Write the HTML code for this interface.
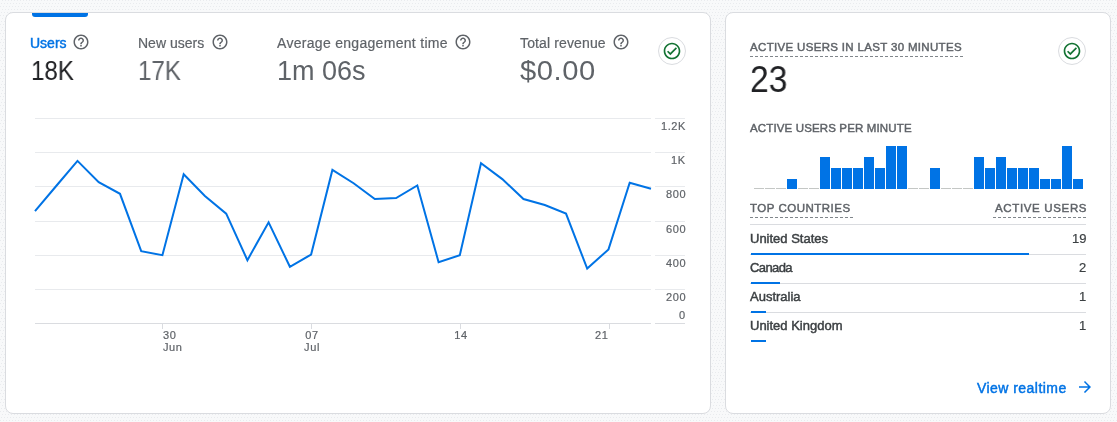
<!DOCTYPE html>
<html><head><meta charset="utf-8"><style>
html,body{margin:0;padding:0;}
body{width:1117px;height:422px;overflow:hidden;position:relative;background:#f8f9fa;font-family:"Liberation Sans",sans-serif;}
.card{position:absolute;background:#fff;border:1px solid #dadce0;border-radius:8px;box-sizing:border-box;}
.t{position:absolute;white-space:nowrap;line-height:1;will-change:transform;}
.s{-webkit-text-stroke:0.2px currentColor;}
.m{-webkit-text-stroke:0.45px currentColor;}
</style></head><body>
<svg style="position:absolute;left:0;top:0" width="1117" height="422"><defs><pattern id="dots" x="0" y="0" width="9" height="9" patternUnits="userSpaceOnUse"><rect x="2" y="0" width="1" height="1" fill="#e9ebee"/><rect x="5" y="0" width="1" height="1" fill="#e9ebee"/><rect x="8" y="0" width="1" height="1" fill="#e9ebee"/><rect x="1" y="3" width="1" height="1" fill="#e9ebee"/><rect x="4" y="3" width="1" height="1" fill="#e9ebee"/><rect x="7" y="3" width="1" height="1" fill="#e9ebee"/><rect x="0" y="6" width="1" height="1" fill="#e9ebee"/><rect x="3" y="6" width="1" height="1" fill="#e9ebee"/><rect x="6" y="6" width="1" height="1" fill="#e9ebee"/></pattern></defs><rect x="0" y="0" width="1117" height="422" fill="url(#dots)"/></svg>
<div class="card" style="left:5px;top:12px;width:706px;height:402px"></div>
<div class="card" style="left:725px;top:12px;width:386px;height:402px"></div>
<div style="position:absolute;left:32px;top:13px;width:56px;height:4px;background:#0073e5;border-radius:0 0 3px 3px"></div>
<svg style="position:absolute;left:0;top:0" width="1117" height="422">
<rect x="35" y="118" width="616" height="1" fill="#e8eaed"/><rect x="655" y="118" width="30" height="1" fill="#e8eaed"/><rect x="35" y="152" width="616" height="1" fill="#e8eaed"/><rect x="655" y="152" width="30" height="1" fill="#e8eaed"/><rect x="35" y="186" width="616" height="1" fill="#e8eaed"/><rect x="655" y="186" width="30" height="1" fill="#e8eaed"/><rect x="35" y="221" width="616" height="1" fill="#e8eaed"/><rect x="655" y="221" width="30" height="1" fill="#e8eaed"/><rect x="35" y="255" width="616" height="1" fill="#e8eaed"/><rect x="655" y="255" width="30" height="1" fill="#e8eaed"/><rect x="35" y="289" width="616" height="1" fill="#e8eaed"/><rect x="655" y="289" width="30" height="1" fill="#e8eaed"/><rect x="35" y="323" width="616" height="1" fill="#dadce0"/><rect x="655" y="323" width="30" height="1" fill="#dadce0"/><rect x="162" y="323" width="1" height="6" fill="#dadce0"/><rect x="311" y="323" width="1" height="6" fill="#dadce0"/><rect x="460" y="323" width="1" height="6" fill="#dadce0"/><rect x="609" y="323" width="1" height="6" fill="#dadce0"/>
<polyline points="35.0,211.2 56.2,186.0 77.5,160.9 98.7,182.2 120.0,193.8 141.2,251.2 162.4,255.2 183.7,174.2 204.9,196.0 226.2,213.7 247.4,260.2 268.6,222.3 289.9,266.8 311.1,254.5 332.4,169.9 353.6,183.2 374.8,199.1 396.1,198.1 417.3,185.5 438.6,262.2 459.8,255.2 481.0,163.2 502.3,179.1 523.5,199.0 544.8,205.0 566.0,213.6 587.2,268.6 608.5,249.4 629.7,182.8 651.0,188.7" fill="none" stroke="#0073e5" stroke-width="2" stroke-linejoin="miter"/>
<rect x="754" y="188" width="10" height="1" fill="#c4c7c5"/><rect x="765" y="188" width="10" height="1" fill="#c4c7c5"/><rect x="776" y="188" width="10" height="1" fill="#c4c7c5"/><rect x="787" y="179" width="10" height="10" fill="#0073e5"/><rect x="798" y="188" width="10" height="1" fill="#c4c7c5"/><rect x="809" y="188" width="10" height="1" fill="#c4c7c5"/><rect x="820" y="157" width="10" height="32" fill="#0073e5"/><rect x="831" y="168" width="10" height="21" fill="#0073e5"/><rect x="842" y="168" width="10" height="21" fill="#0073e5"/><rect x="853" y="168" width="10" height="21" fill="#0073e5"/><rect x="864" y="157" width="10" height="32" fill="#0073e5"/><rect x="875" y="168" width="10" height="21" fill="#0073e5"/><rect x="886" y="146" width="10" height="43" fill="#0073e5"/><rect x="897" y="146" width="10" height="43" fill="#0073e5"/><rect x="908" y="188" width="10" height="1" fill="#c4c7c5"/><rect x="919" y="188" width="10" height="1" fill="#c4c7c5"/><rect x="930" y="168" width="10" height="21" fill="#0073e5"/><rect x="941" y="188" width="10" height="1" fill="#c4c7c5"/><rect x="952" y="188" width="10" height="1" fill="#c4c7c5"/><rect x="963" y="188" width="10" height="1" fill="#c4c7c5"/><rect x="974" y="157" width="10" height="32" fill="#0073e5"/><rect x="985" y="168" width="10" height="21" fill="#0073e5"/><rect x="996" y="157" width="10" height="32" fill="#0073e5"/><rect x="1007" y="168" width="10" height="21" fill="#0073e5"/><rect x="1018" y="168" width="10" height="21" fill="#0073e5"/><rect x="1029" y="168" width="10" height="21" fill="#0073e5"/><rect x="1040" y="179" width="10" height="10" fill="#0073e5"/><rect x="1051" y="179" width="10" height="10" fill="#0073e5"/><rect x="1062" y="146" width="10" height="43" fill="#0073e5"/><rect x="1073" y="179" width="10" height="10" fill="#0073e5"/>
</svg>
<div id="users" class="t m" style="top:36.15px;font-size:14px;color:#0073e5;letter-spacing:0px;left:30px;">Users</div><div id="newusers" class="t s" style="top:36.15px;font-size:14px;color:#5f6368;letter-spacing:0px;left:138px;">New users</div><div id="avg" class="t s" style="top:36.15px;font-size:14px;color:#5f6368;letter-spacing:0.3px;left:277px;">Average engagement time</div><div id="rev" class="t s" style="top:36.15px;font-size:14px;color:#5f6368;letter-spacing:0.13px;left:520px;">Total revenue</div><div id="v18k" class="t" style="top:57.64px;font-size:27px;color:#202124;letter-spacing:0px;transform:scaleX(0.894);transform-origin:0 0;left:31px;">18K</div><div id="v17k" class="t" style="top:57.64px;font-size:27px;color:#5f6368;letter-spacing:0px;transform:scaleX(0.894);transform-origin:0 0;left:138px;">17K</div><div id="v1m" class="t" style="top:57.64px;font-size:27px;color:#5f6368;letter-spacing:0px;left:277px;">1m 06s</div><div id="v0" class="t" style="top:57.64px;font-size:27px;color:#5f6368;letter-spacing:0.5px;transform:scaleX(1.08);transform-origin:0 0;left:520px;">$0.00</div><div id="act30" class="t m" style="top:41.77px;font-size:11.5px;color:#5f6368;letter-spacing:0.33px;left:750px;">ACTIVE USERS IN LAST 30 MINUTES</div><div id="v23" class="t" style="top:62.03px;font-size:36px;color:#202124;letter-spacing:0px;transform:scaleX(0.935);transform-origin:0 0;left:750.2px;">23</div><div id="permin" class="t m" style="top:122.77px;font-size:11.5px;color:#5f6368;letter-spacing:0.14px;left:750px;">ACTIVE USERS PER MINUTE</div><div id="topc" class="t m" style="top:202.77px;font-size:11.5px;color:#5f6368;letter-spacing:0.5px;left:750px;">TOP COUNTRIES</div><div id="actu" class="t m" style="top:202.77px;font-size:11.5px;color:#5f6368;letter-spacing:0.65px;right:30.35px;text-align:right;">ACTIVE USERS</div><div id="us" class="t m" style="top:232.00px;font-size:13px;color:#3c4043;letter-spacing:0px;left:750px;">United States</div><div id="n19" class="t s" style="top:232.00px;font-size:13px;color:#3c4043;letter-spacing:0px;right:31.00px;text-align:right;">19</div><div id="ca" class="t m" style="top:261.00px;font-size:13px;color:#3c4043;letter-spacing:-0.6px;left:750px;">Canada</div><div id="n2" class="t s" style="top:261.00px;font-size:13px;color:#3c4043;letter-spacing:0px;right:31.00px;text-align:right;">2</div><div id="au" class="t m" style="top:290.00px;font-size:13px;color:#3c4043;letter-spacing:0px;left:750px;">Australia</div><div id="n1a" class="t s" style="top:290.00px;font-size:13px;color:#3c4043;letter-spacing:0px;right:31.00px;text-align:right;">1</div><div id="uk" class="t m" style="top:319.00px;font-size:13px;color:#3c4043;letter-spacing:0px;left:750px;">United Kingdom</div><div id="n1b" class="t s" style="top:319.00px;font-size:13px;color:#3c4043;letter-spacing:0px;right:31.00px;text-align:right;">1</div><div id="view" class="t m" style="top:381.15px;font-size:14px;color:#0073e5;letter-spacing:0.45px;left:977px;">View realtime</div><div id="y12" class="t s" style="top:120.69px;font-size:11px;color:#5f6368;letter-spacing:0.6px;right:430.90px;text-align:right;">1.2K</div><div id="y1k" class="t s" style="top:154.69px;font-size:11px;color:#5f6368;letter-spacing:0.6px;right:430.90px;text-align:right;">1K</div><div id="y800" class="t s" style="top:188.69px;font-size:11px;color:#5f6368;letter-spacing:0.6px;right:430.90px;text-align:right;">800</div><div id="y600" class="t s" style="top:223.69px;font-size:11px;color:#5f6368;letter-spacing:0.6px;right:430.90px;text-align:right;">600</div><div id="y400" class="t s" style="top:257.69px;font-size:11px;color:#5f6368;letter-spacing:0.6px;right:430.90px;text-align:right;">400</div><div id="y200" class="t s" style="top:291.69px;font-size:11px;color:#5f6368;letter-spacing:0.6px;right:430.90px;text-align:right;">200</div><div id="y0" class="t s" style="top:309.69px;font-size:11px;color:#5f6368;letter-spacing:0.6px;right:430.90px;text-align:right;">0</div><div id="x30" class="t s" style="top:329.69px;font-size:11px;color:#5f6368;letter-spacing:0.6px;left:163px;">30</div><div id="xjun" class="t s" style="top:341.69px;font-size:11px;color:#5f6368;letter-spacing:0.6px;left:163px;">Jun</div><div id="x07" class="t s" style="top:329.69px;font-size:11px;color:#5f6368;letter-spacing:0.6px;left:211.80px;width:200px;text-align:center;">07</div><div id="xjul" class="t s" style="top:341.69px;font-size:11px;color:#5f6368;letter-spacing:0.6px;left:211.80px;width:200px;text-align:center;">Jul</div><div id="x14" class="t s" style="top:329.69px;font-size:11px;color:#5f6368;letter-spacing:0.6px;left:360.80px;width:200px;text-align:center;">14</div><div id="x21" class="t s" style="top:329.69px;font-size:11px;color:#5f6368;letter-spacing:0.6px;right:508.40px;text-align:right;">21</div><svg style="position:absolute;left:71.5px;top:33px" width="18" height="18" viewBox="0 0 24 24"><path fill="#5f6368" d="M11 18h2v-2h-2v2zm1-16C6.48 2 2 6.48 2 12s4.48 10 10 10 10-4.48 10-10S17.52 2 12 2zm0 18c-4.41 0-8-3.590-8-8s3.590-8 8-8 8 3.590 8 8-3.590 8-8 8zm0-14c-2.210 0-4 1.790-4 4h2c0-1.1.9-2 2-2s2 .9 2 2c0 2-3 1.75-3 5h2c0-2.25 3-2.5 3-5 0-2.210-1.790-4-4-4z"/></svg><svg style="position:absolute;left:210.5px;top:33px" width="18" height="18" viewBox="0 0 24 24"><path fill="#5f6368" d="M11 18h2v-2h-2v2zm1-16C6.48 2 2 6.48 2 12s4.48 10 10 10 10-4.48 10-10S17.52 2 12 2zm0 18c-4.41 0-8-3.590-8-8s3.590-8 8-8 8 3.590 8 8-3.590 8-8 8zm0-14c-2.210 0-4 1.790-4 4h2c0-1.1.9-2 2-2s2 .9 2 2c0 2-3 1.75-3 5h2c0-2.25 3-2.5 3-5 0-2.210-1.790-4-4-4z"/></svg><svg style="position:absolute;left:454px;top:33px" width="18" height="18" viewBox="0 0 24 24"><path fill="#5f6368" d="M11 18h2v-2h-2v2zm1-16C6.48 2 2 6.48 2 12s4.48 10 10 10 10-4.48 10-10S17.52 2 12 2zm0 18c-4.41 0-8-3.590-8-8s3.590-8 8-8 8 3.590 8 8-3.590 8-8 8zm0-14c-2.210 0-4 1.790-4 4h2c0-1.1.9-2 2-2s2 .9 2 2c0 2-3 1.75-3 5h2c0-2.25 3-2.5 3-5 0-2.210-1.790-4-4-4z"/></svg><svg style="position:absolute;left:612px;top:33px" width="18" height="18" viewBox="0 0 24 24"><path fill="#5f6368" d="M11 18h2v-2h-2v2zm1-16C6.48 2 2 6.48 2 12s4.48 10 10 10 10-4.48 10-10S17.52 2 12 2zm0 18c-4.41 0-8-3.590-8-8s3.590-8 8-8 8 3.590 8 8-3.590 8-8 8zm0-14c-2.210 0-4 1.790-4 4h2c0-1.1.9-2 2-2s2 .9 2 2c0 2-3 1.75-3 5h2c0-2.25 3-2.5 3-5 0-2.210-1.790-4-4-4z"/></svg><div style="position:absolute;left:658px;top:37px;width:26px;height:26px;border:1px solid #dadce0;border-radius:50%"></div><svg style="position:absolute;left:662px;top:41px" width="20" height="20" viewBox="0 0 24 24"><path fill="#137333" d="M12 2C6.48 2 2 6.48 2 12s4.48 10 10 10 10-4.48 10-10S17.52 2 12 2zm0 18c-4.41 0-8-3.59-8-8s3.59-8 8-8 8 3.59 8 8-3.59 8-8 8zm4.59-12.42L10 14.17l-2.59-2.58L6 13l4 4 8-8z"/></svg><div style="position:absolute;left:1058px;top:37px;width:26px;height:26px;border:1px solid #dadce0;border-radius:50%"></div><svg style="position:absolute;left:1062px;top:41px" width="20" height="20" viewBox="0 0 24 24"><path fill="#137333" d="M12 2C6.48 2 2 6.48 2 12s4.48 10 10 10 10-4.48 10-10S17.52 2 12 2zm0 18c-4.41 0-8-3.59-8-8s3.59-8 8-8 8 3.59 8 8-3.59 8-8 8zm4.59-12.42L10 14.17l-2.59-2.58L6 13l4 4 8-8z"/></svg><div style="position:absolute;left:750px;top:56px;width:214px;height:1px;background:repeating-linear-gradient(90deg,#80868b 0 3px,transparent 3px 5px)"></div><div style="position:absolute;left:750px;top:217px;width:103px;height:1px;background:repeating-linear-gradient(90deg,#80868b 0 3px,transparent 3px 5px)"></div><div style="position:absolute;left:993px;top:217px;width:93px;height:1px;background:repeating-linear-gradient(90deg,#80868b 0 3px,transparent 3px 5px)"></div><div style="position:absolute;left:750px;top:224px;width:336px;height:1px;background:#dadce0"></div><div style="position:absolute;left:750px;top:254px;width:336px;height:1px;background:#dadce0"></div><div style="position:absolute;left:751px;top:253px;width:278px;height:2px;background:#0073e5"></div><div style="position:absolute;left:750px;top:283px;width:336px;height:1px;background:#dadce0"></div><div style="position:absolute;left:751px;top:282px;width:29px;height:2px;background:#0073e5"></div><div style="position:absolute;left:750px;top:312px;width:336px;height:1px;background:#dadce0"></div><div style="position:absolute;left:751px;top:311px;width:15px;height:2px;background:#0073e5"></div><div style="position:absolute;left:751px;top:340px;width:15px;height:2px;background:#0073e5"></div><svg style="position:absolute;left:1079px;top:381px" width="12" height="12" viewBox="0 0 16 16"><path fill="#0073e5" d="M8 0L6.59 1.41 12.170 7H0v2h12.17l-5.58 5.59L8 16l8-8z"/></svg>
</body></html>
